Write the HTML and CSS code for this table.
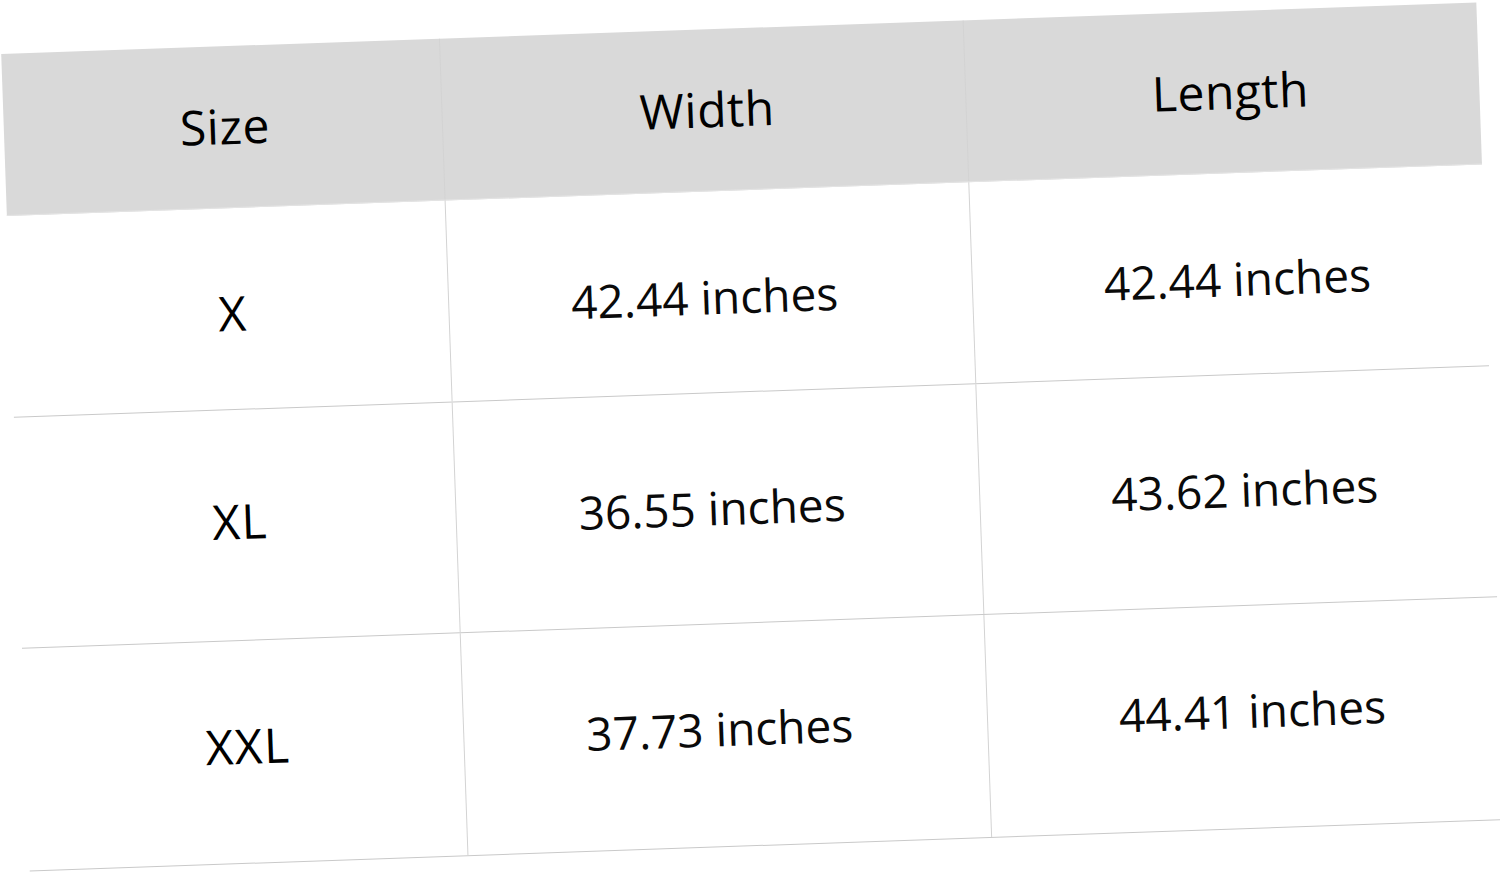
FILE: index.html
```html
<!DOCTYPE html>
<html>
<head>
<meta charset="utf-8">
<link rel="stylesheet" href="styles.css">
</head>
<body>
<div class="page">
  <div class="table">
    <div class="row head">
      <div class="cell c1">Size</div>
      <div class="cell c2">Width</div>
      <div class="cell c3">Length</div>
    </div>
    <div class="row r1">
      <div class="cell c1">X</div>
      <div class="cell c2">42.44 inches</div>
      <div class="cell c3">42.44 inches</div>
    </div>
    <div class="row r2">
      <div class="cell c1">XL</div>
      <div class="cell c2">36.55 inches</div>
      <div class="cell c3">43.62 inches</div>
    </div>
    <div class="row r3">
      <div class="cell c1">XXL</div>
      <div class="cell c2">37.73 inches</div>
      <div class="cell c3">44.41 inches</div>
    </div>
  </div>
</div>
</body>
</html>
```
FILE: styles.css
```css
html, body {
  margin: 0;
  padding: 0;
  background: #ffffff;
  overflow: hidden;
}
.page {
  width: 1500px;
  height: 873px;
  padding: 28px 0 0 15px;
  box-sizing: border-box;
}
.table {
  width: 1476px;
  transform: rotate(-2deg);
  transform-origin: 738px 408px;
  font-family: "Open Sans", "Liberation Sans", sans-serif;
  font-size: 46px;
  color: #0a0a0a;
}
.row {
  display: flex;
  border-bottom: 1px solid #c9c9c9;
}
.head {
  height: 161px;
  background: #d9d9d9;
  border-bottom: 1px solid #e4e4e4;
  font-size: 48px;
  font-weight: 500;
  letter-spacing: 0.5px;
  color: #000000;
}
.r1 { height: 201px; }
.r2 { height: 230px; }
.r3 { height: 222px; }
.cell {
  display: flex;
  align-items: center;
  justify-content: center;
  box-sizing: border-box;
}
.r1 .cell { padding-top: 8px; }
.r2 .cell { padding-bottom: 2px; }
.r2 .c1 { padding-bottom: 10px; }
.r3 .cell { padding-bottom: 14px; }
.head .cell { padding-bottom: 2px; }
.c1 { width: 438px; }
.c2 { width: 524px; border-left: 1px solid #d3d3d3; padding-right: 12px; }
.c3 { width: 514px; border-left: 1px solid #d3d3d3; padding-left: 16px; }
.head .c1 { padding-left: 4px; }
.head .c2 { padding-right: 0; padding-left: 6px; }
.head .c3 { padding-left: 15px; }
.row .c1 {
  font-size: 48px;
  font-weight: 500;
  letter-spacing: 1.5px;
  color: #000000;
}
.r1 .c1, .r2 .c1, .r3 .c1 { padding-left: 7px; }
.head .c1 {
  letter-spacing: 0.5px;
}
```
